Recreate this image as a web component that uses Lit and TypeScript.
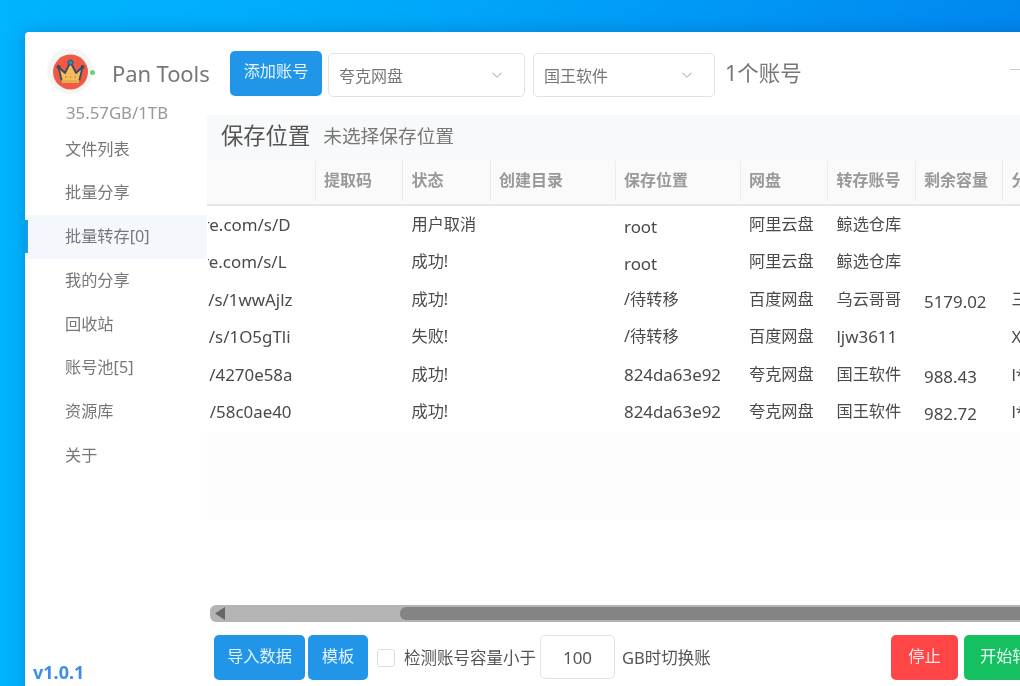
import { LitElement, html, css, svg } from "lit";
import { customElement } from "lit/decorators.js";

const nav = ["文件列表", "批量分享", "批量转存[0]", "我的分享", "回收站", "账号池[5]", "资源库", "关于"];
const cols = [
  ["", 107.5], ["提取码", 87.5], ["状态", 87.5], ["创建目录", 125], ["保存位置", 125],
  ["网盘", 87.5], ["转存账号", 87.5], ["剩余容量", 87.5], ["分享者", 120],
] as [string, number][];
const rows = [
  ["re.com/s/D", 24, "", "用户取消", "", "root", "阿里云盘", "鲸选仓库", "", ""],
  ["re.com/s/L", 28, "", "成功!", "", "root", "阿里云盘", "鲸选仓库", "", ""],
  ["/s/1wwAjlz", 22, "", "成功!", "", "/待转移", "百度网盘", "乌云哥哥", "5179.02", "三"],
  ["/s/1O5gTli", 24, "", "失败!", "", "/待转移", "百度网盘", "ljw3611", "", "X"],
  ["/4270e58a", 22, "", "成功!", "", "824da63e92", "夸克网盘", "国王软件", "988.43", "l*"],
  ["/58c0ae40", 23, "", "成功!", "", "824da63e92", "夸克网盘", "国王软件", "982.72", "l*"],
] as (string | number)[][];

const crown = svg`<svg class="logo" viewBox="0 0 46 46" width="46" height="46">
  <circle cx="23" cy="23" r="23" fill="#f5f5f5"/>
  <circle cx="23.5" cy="24" r="17.5" fill="#ef5a47"/>
  <path d="M11.5 19 15 34h17l3.5-15-6.5 6-5.500-11-5.500 11z" fill="#f4bd5c" stroke="#3d4a63" stroke-width="1.800" stroke-linejoin="round"/>
  <rect x="14.500" y="32" width="18" height="3" fill="#e8a94e"/>
  <circle cx="23.500" cy="14.500" r="2.600" fill="#2a8fb0" stroke="#3d4a63" stroke-width="1"/>
  <circle cx="11.500" cy="19" r="2" fill="#3d4a63"/>
  <circle cx="35.500" cy="19" r="2" fill="#3d4a63"/>
  <circle cx="19" cy="29" r="1" fill="#d9913c"/><circle cx="23.500" cy="29" r="1" fill="#d9913c"/><circle cx="28" cy="29" r="1" fill="#d9913c"/>
</svg>`;

const chevron = svg`<svg class="chev" viewBox="0 0 12 12" width="12" height="12"><path d="M1.500 3.800 6 8.200l4.500-4.400" fill="none" stroke="#c4c4c4" stroke-width="1.200"/></svg>`;

const isLatin = (c: string | number) => /^[\x00-\x7f]+$/.test(String(c));

@customElement("app-root")
export class AppRoot extends LitElement {
  static styles = css`
    :host {
      display: block; width: 1020px; height: 686px; overflow: hidden; box-sizing: border-box;
      padding: 32px 0 0 25px;
      background: linear-gradient(90deg, #00b4ff 0, #00a8fa 40%, #0088f0 100%);
      font-family: "Noto Sans", "Noto Sans CJK SC", sans-serif; color: #555;
    }
    .win { display: flex; width: 1120px; height: 680px; background: #fff; border-radius: 4px 4px 0 0; box-shadow: 0 0 18px rgba(0, 50, 120, .28); filter: blur(.3px); }
    .side { width: 182px; flex: none; display: flex; flex-direction: column; position: relative; height: 654px; }
    .brand { display: flex; align-items: flex-start; padding: 16px 0 0 22px; height: 53px; }
    .logo { flex: none; }
    .dot { width: 5px; height: 5px; border-radius: 50%; background: #6fd083; margin: 22px 0 0 -3px; flex: none; }
    .name { margin: 10px 0 0 17px; font-size: 22px; line-height: 30px; color: #777; white-space: nowrap; letter-spacing: -.1px; }
    .store { margin: 2px 0 0 41px; font-size: 16.800px; line-height: 20px; color: #999; }
    .nav { display: flex; flex-direction: column; margin-top: 4.500px; }
    .item { height: 43.8px; line-height: 43.8px; padding-left: 40px; font-size: 16.200px; color: #777; position: relative; }
    .item.on { background: #f4f8fd; }
    .item.on::before { content: ""; position: absolute; left: 0; top: 5px; height: 33px; width: 3px; background: #1a9be8; }
    .ver { margin-top: auto; padding: 0 0 0 8px; height: 26px; font-size: 18px; line-height: 24px; font-weight: 700; color: #3b8fe8; }
    .main { flex: 1; min-width: 0; display: flex; flex-direction: column; height: 654px; }
    .bar { display: flex; align-items: flex-start; height: 83px; box-sizing: border-box; padding-top: 19px; padding-left: 23px; }
    .btn { border: 0; border-radius: 5px; color: #fff; font: inherit; font-size: 16.200px; height: 45px; padding: 0 0 5px; box-sizing: border-box; flex: none; display: flex; align-items: center; justify-content: center; }
    .blue { background: #2196e8; color: #e6f4ff; }
    .add { width: 92px; padding-bottom: 8px; }
    .sel { margin: 2px 0 0 6px; height: 44px; box-sizing: border-box; border: 1px solid #e2e2e2; border-radius: 5px; display: flex; align-items: center; justify-content: space-between; padding: 0 21px 0 10px; font-size: 16px; color: #777; flex: none; }
    .s1 { width: 197px; }
    .s2 { width: 182px; margin-left: 8px; }
    .count { margin-left: 10px; font-size: 21.500px; line-height: 44px; color: #777; white-space: nowrap; width: 75px; flex: none; }
    .min { margin-left: 210px; margin-top: 18px; width: 22px; height: 1px; background: #c9c9c9; flex: none; }
    .title { height: 43px; box-sizing: border-box; padding: 0 0 5px 14px; background: #f8f9fa; display: flex; align-items: center; flex: none; }
    .title b { font-weight: 400; font-size: 22.300px; color: #555; }
    .title span { margin-left: 13px; font-size: 18.700px; color: #777; }
    .table { height: 447px; flex: none; overflow: hidden; background: linear-gradient(180deg, #fff 0, #fff 274px, #fdfdfd 274px, #fdfdfd 362px, #fff 362px); }
    .tr { display: flex; }
    .th { height: 46px; background: #fafafa; border-bottom: 2px solid #e8e8e8; box-sizing: content-box; }
    .th > div { position: relative; display: flex; align-items: center; padding: 0 0 4px 9.500px; box-sizing: border-box; font-size: 16px; font-weight: 700; color: #999; white-space: nowrap; flex: none; }
    .th > div:not(:first-child)::before { content: ""; position: absolute; left: 0; top: 3px; bottom: 3px; width: 1px; background: #ececec; }
    .td { height: 37.400px; }
    .td > div { box-sizing: border-box; padding-left: 9.500px; font-size: 16.200px; line-height: 37.400px; color: #4a4a4a; white-space: nowrap; flex: none; overflow: hidden; }
    .td > div.lat { font-size: 16.900px; }
    .td > div.url { display: flex; justify-content: flex-end; padding-left: 0; margin-left: 1px; font-size: 16.900px; }
    .td > div.low { line-height: 42px; }
    .scroll { position: relative; height: 17px; margin: 0 0 0 3px; background: #b4b4b4; border-radius: 6px 0 0 6px; flex: none; }
    .scroll i { position: absolute; left: 190px; right: 0; top: 2px; bottom: 2px; background: #848484; border-radius: 6px 0 0 6px; }
    .scroll svg { position: absolute; left: 4px; top: 2px; }
    .foot { display: flex; align-items: flex-start; padding: 13px 0 0 7px; }
    .b1 { width: 91px; }
    .b2 { width: 60px; margin-left: 3px; }
    .chk { width: 18px; height: 18px; box-sizing: border-box; border: 1px solid #dedede; border-radius: 3px; margin: 14px 0 0 9px; flex: none; }
    .lab { font-size: 16.500px; line-height: 46px; color: #555; white-space: nowrap; flex: none; }
    .l1 { margin-left: 9px; width: 136px; }
    .num { width: 75px; height: 44px; box-sizing: border-box; border: 1px solid #e2e2e2; border-radius: 5px; text-align: center; line-height: 44px; font-size: 17px; color: #555; flex: none; }
    .l2 { margin-left: 7px; width: 269px; }
    .red { width: 67px; background: #ff4545; color: #ffe9e9; }
    .green { width: 90px; margin-left: 6px; background: #14c060; color: #e8fff2; justify-content: flex-start; padding-left: 16px; white-space: nowrap; }
  `;

  render() {
    return html`<div class="win">
      <aside class="side">
        <div class="brand">${crown}<span class="dot"></span><span class="name">Pan Tools</span></div>
        <div class="store">35.57GB/1TB</div>
        <nav class="nav">${nav.map((n, i) => html`<div class="item ${i === 2 ? "on" : ""}">${n}</div>`)}</nav>
        <div class="ver">v1.0.1</div>
      </aside>
      <section class="main">
        <div class="bar">
          <button class="btn blue add">添加账号</button>
          <div class="sel s1">夸克网盘${chevron}</div>
          <div class="sel s2">国王软件${chevron}</div>
          <div class="count">1个账号</div>
          <div class="min"></div>
        </div>
        <div class="title"><b>保存位置</b><span>未选择保存位置</span></div>
        <div class="table">
          <div class="tr th">${cols.map(([t, w]) => html`<div style="width:${w}px">${t}</div>`)}</div>
          ${rows.map((r) => html`<div class="tr td">
            <div class="url" style="width:${cols[0][1] - 1}px;padding-right:${r[1]}px">${r[0]}</div>
            ${r.slice(2).map((c, i) => html`<div class="${(i === 3 && c === "root") || i === 6 ? "low" : ""} ${c && isLatin(c) ? "lat" : ""}" style="width:${cols[i + 1][1]}px">${c}</div>`)}
          </div>`)}
        </div>
        <div class="scroll"><svg width="12" height="13" viewBox="0 0 12 13"><path d="M11 0v13L1 6.500z" fill="#666"/></svg><i></i></div>
        <div class="foot">
          <button class="btn blue b1">导入数据</button>
          <button class="btn blue b2">模板</button>
          <span class="chk"></span>
          <span class="lab l1">检测账号容量小于</span>
          <span class="num">100</span>
          <span class="lab l2">GB时切换账</span>
          <button class="btn red">停止</button>
          <button class="btn green">开始转存</button>
        </div>
      </section>
    </div>`;
  }
}
